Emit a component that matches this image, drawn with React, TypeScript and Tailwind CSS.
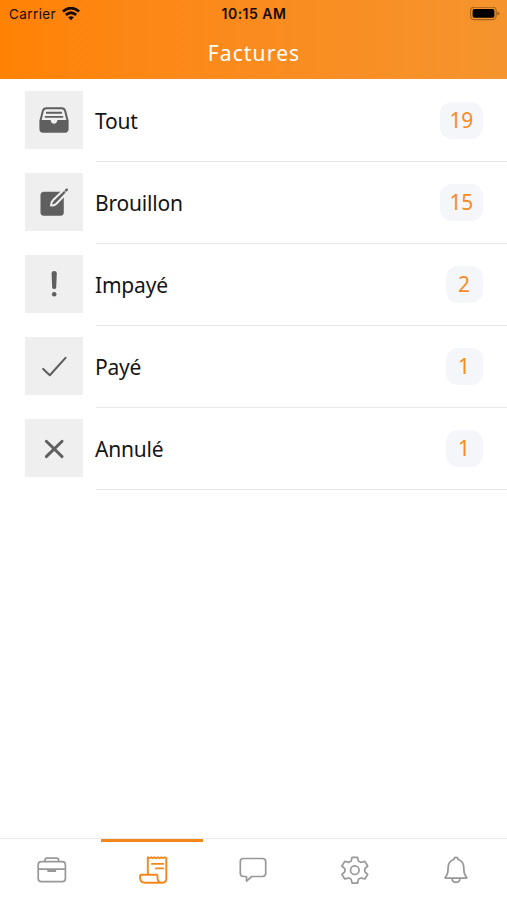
import type { ReactNode } from 'react';

const ink = '#5f5f5f';

const InboxIcon = () => (
  <svg viewBox="0 0 58 58" className="size-[58px]" fill="none">
    <path d="M15.500 29.500 17.800 20q.8-2.700 3.600-2.700h15.200q2.800 0 3.600 2.700L42.500 29.500" stroke={ink} strokeWidth="2" />
    <path d="M21.800 21.800h14.400M20.600 25.900h16.800" stroke={ink} strokeWidth="1.900" strokeLinecap="round" />
    <path d="M14.400 29h11.200q.5 3.800 3.400 3.800t3.400-3.800h11.200v9q0 3.700-3.700 3.700H18.100q-3.700 0-3.700-3.700Z" fill={ink} />
  </svg>
);

const DraftIcon = () => (
  <svg viewBox="0 0 58 58" className="size-[58px]" fill="none">
    <rect x="15.500" y="18.800" width="23.300" height="24" rx="3.500" fill={ink} />
    <path d="M26 32.600q.1-3.600 2-5.400l10.400-9.900 3 3-10 10.400q-1.900 1.900-5.400 1.900Z" fill={ink} stroke="#efefef" strokeWidth="2" strokeLinejoin="round" />
    <path d="m39.800 18.700 2-2" stroke={ink} strokeWidth="2.400" strokeLinecap="round" />
    <path d="m38.600 16.900 3 3" stroke="#efefef" strokeWidth="1" />
  </svg>
);

const UnpaidIcon = () => (
  <svg viewBox="0 0 58 58" className="size-[58px]" fill={ink}>
    <path d="M26.600 18.300q0-2.200 2.600-2.200t2.600 2.200l-.6 14.200q-.1 1.500-2 1.500t-2-1.500Z" />
    <circle cx="29.200" cy="39.200" r="2.300" />
  </svg>
);

const PaidIcon = () => (
  <svg viewBox="0 0 58 58" className="size-[58px]" fill="none">
    <path d="m18.200 31.900 6.600 6.300 15.700-17.300" stroke={ink} strokeWidth="2.100" strokeLinecap="round" strokeLinejoin="round" />
  </svg>
);

const CancelIcon = () => (
  <svg viewBox="0 0 58 58" className="size-[58px]" fill="none">
    <path d="m21.300 22.200 15.800 15.400M37.100 22.200 21.300 37.600" stroke={ink} strokeWidth="2.900" strokeLinecap="round" />
  </svg>
);

const BriefcaseIcon = () => (
  <svg viewBox="-1 0 32 32" className="size-8" fill="none" stroke="currentColor" strokeWidth="1.700">
    <rect x="2.200" y="7.600" width="27.200" height="20" rx="3.200" />
    <path d="M9 7.500V6.100q0-2 2-2h9.600q2 0 2 2v1.400M2.200 15.200h27.200" />
    <path d="M11.200 15.400h9v1.500q0 1-.9 1h-7.200q-.9 0-.9-1Z" fill="currentColor" stroke="none" />
  </svg>
);

const InvoiceIcon = () => (
  <svg viewBox="-2 0 32 32" className="size-8" fill="none" stroke="currentColor" strokeWidth="1.900" strokeLinejoin="round" strokeLinecap="round">
    <path d="M9.800 19.700V3.200l1.600 1 1.700-1 1.700 1 1.700-1 1.700 1 1.700-1 1.700 1 1.700-1 1.700 1 1.700-1 1.600 1v20.200q0 4.300-4.600 4.300H7.100q-5 0-5-5v-2q0-1 1-1h15.400q1 0 1 1v2q0 5 4.500 5" />
    <path d="M13.800 9.900h11.600M17.800 14.400h7.600" strokeWidth="1.700" />
  </svg>
);

const ChatIcon = () => (
  <svg viewBox="-.5 0 32 32" className="size-8" fill="none" stroke="currentColor" strokeWidth="1.700" strokeLinejoin="round">
    <path d="M6 4.500h19q3.200 0 3.200 3.200v11.600q0 3.200-3.200 3.200H14.300L9 27.100v-4.600H6q-3.200 0-3.200-3.200V7.700Q2.800 4.500 6 4.500Z" />
  </svg>
);

const GearIcon = () => (
  <svg viewBox="0 0 32 32" className="size-8" fill="none" stroke="currentColor" strokeWidth="1.700" strokeLinejoin="round">
    <path d="M13.100 3.300h5.400l.8 3.200q.2.700.9 1.100l1 .5q.7.400 1.400.2l3.200-.9 2.900 4.600-2.500 2.300q-.5.500-.5 1.200v1.400q0 .7.500 1.200l2.500 2.300-2.900 4.600-3.200-.9q-.7-.2-1.400.2l-1 .5q-.7.400-.9 1.100l-.8 3.200h-5.400l-.8-3.200q-.2-.7-.9-1.100l-1-.5q-.7-.4-1.400-.2l-3.200.9-2.900-4.600 2.500-2.300q.5-.5.500-1.200v-1.400q0-.7-.5-1.200l-2.500-2.300 2.900-4.600 3.200.9q.7.200 1.400-.2l1-.5q.7-.4.9-1.100Z" />
    <circle cx="15.800" cy="16.200" r="4.300" />
  </svg>
);

const BellIcon = () => (
  <svg viewBox="0 0 32 32" className="size-8" fill="none" stroke="currentColor" strokeWidth="1.700" strokeLinejoin="round">
    <path d="M13.900 5.500q0-2.100 2.100-2.100t2.100 2.100q5.700 1.800 5.700 8.500 0 5.200 1.500 7.500l1.400 1.700q.5.900-.6.900H5.800q-1.100 0-.6-.9l1.400-1.700q1.500-2.300 1.500-7.500 0-6.700 5.800-8.500Z" />
    <path d="M12 24.300q.5 4 4 4t4-4" />
  </svg>
);

const WifiIcon = () => (
  <svg viewBox="0 0 18 14" className="h-3.5 w-[18px]" fill="none" stroke="#160b00" strokeWidth="2.700">
    <path d="M.9 4.600q8.100-7 16.200 0M3.800 7.900q5.200-4.300 10.400 0" />
    <path d="M6.100 10.300q2.900-2.300 5.800 0L9 13.300Z" fill="#160b00" stroke="none" />
  </svg>
);

const BatteryIcon = () => (
  <svg viewBox="0 0 32 14" className="h-3.5 w-8">
    <rect x="1.600" y=".1" width="25.600" height="12.600" rx="3.600" fill="none" stroke="#a96317" strokeWidth="1.200" />
    <rect x="3.600" y="2.100" width="21.800" height="8.600" rx="1.700" fill="#000" />
    <path d="M28.300 4.500q2.200.5 2.200 2t-2.200 2Z" fill="#a96317" />
  </svg>
);

const rows: { label: string; count: number; icon: ReactNode }[] = [
  { label: 'Tout', count: 19, icon: <InboxIcon /> },
  { label: 'Brouillon', count: 15, icon: <DraftIcon /> },
  { label: 'Impayé', count: 2, icon: <UnpaidIcon /> },
  { label: 'Payé', count: 1, icon: <PaidIcon /> },
  { label: 'Annulé', count: 1, icon: <CancelIcon /> },
];

const tabs: { name: string; icon: ReactNode; active?: boolean }[] = [
  { name: 'briefcase', icon: <BriefcaseIcon /> },
  { name: 'invoices', icon: <InvoiceIcon />, active: true },
  { name: 'chat', icon: <ChatIcon /> },
  { name: 'settings', icon: <GearIcon /> },
  { name: 'alerts', icon: <BellIcon /> },
];

export default function App() {
  return (
    <div className="flex h-[900px] w-[507px] flex-col overflow-hidden bg-white font-['Noto_Sans',sans-serif]">
      <header className="h-[79px] shrink-0 bg-linear-to-r from-[#ff8203] to-[#f5942d]">
        <div className="grid h-[27px] grid-cols-[1fr_auto_1fr] items-center pr-1.5 pl-[7px] font-['Inter',sans-serif] text-[#160b00]">
          <div className="flex items-center gap-1.5 pl-0.5">
            <span className="pt-px text-[13.500px] tracking-[0.4px]">Carrier</span>
            <WifiIcon />
          </div>
          <span className="text-center text-[14px] font-semibold tracking-[0.500px]">10:15 AM</span>
          <div className="flex justify-end">
            <BatteryIcon />
          </div>
        </div>
        <h1 className="pl-px text-center text-[21px] leading-[53px] tracking-[1.150px] text-white">Factures</h1>
      </header>

      <main className="flex-1 pt-px">
        {rows.map((row) => (
          <div key={row.label} className="flex h-[82px] pl-[25px]">
            <div className="mt-[11px] size-[58px] shrink-0 bg-[#efefef]">{row.icon}</div>
            <div className="ml-[13px] flex flex-1 items-center justify-between border-b border-[#e8e8e8] pr-6">
              <span className="-ml-px pt-0.5 text-[21px] tracking-[-0.200px] text-[#151515]">{row.label}</span>
              <span className="mb-px flex h-[37px] min-w-[37px] items-center justify-center rounded-xl bg-[#f5f6fa] px-[9px] pr-[10px] pt-px text-[21px] tracking-[-0.200px] text-[#f58c1f]">
                {row.count}
              </span>
            </div>
          </div>
        ))}
      </main>

      <nav className="grid h-[62px] shrink-0 grid-cols-5 border-t border-[#ebebeb]">
        {tabs.map((tab) => (
          <div
            key={tab.name}
            className={
              tab.active
                ? 'flex h-[62px] justify-center border-t-[3px] border-[#f5861b] pt-3 text-[#f5861b]'
                : 'flex h-[62px] justify-center border-t-[3px] border-transparent pt-3 text-[#989898]'
            }
          >
            {tab.icon}
          </div>
        ))}
      </nav>
    </div>
  );
}
